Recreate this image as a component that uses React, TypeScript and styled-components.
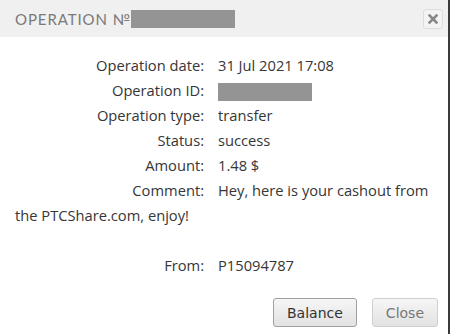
import React from 'react';
import styled, { createGlobalStyle } from 'styled-components';

interface Row {
  label: string;
  value?: string;
  redacted?: boolean;
}

const rows: Row[] = [
  { label: 'Operation date:', value: '31 Jul 2021 17:08' },
  { label: 'Operation ID:', redacted: true },
  { label: 'Operation type:', value: 'transfer' },
  { label: 'Status:', value: 'success' },
  { label: 'Amount:', value: '1.48 $' },
  { label: 'Comment:', value: 'Hey, here is your cashout from the PTCShare.com, enjoy!' },
];

const App = (): JSX.Element => {
  return (
    <>
      <GlobalStyle />
      <Dialog>
        <Header>
          <Title>
            Operation №<Redacted width={104} />
          </Title>
          <CloseIcon aria-label="close">
            <svg width="10" height="10" viewBox="0 0 10 10">
              <path d="M1.5 1.5 L8.5 8.5 M8.5 1.5 L1.5 8.5" stroke="#888" strokeWidth="2.6" strokeLinecap="square" />
            </svg>
          </CloseIcon>
        </Header>
        <Body>
          {rows.map((row, index) => (
            <Line key={index}>
              <Label>{row.label}</Label>
              {row.redacted ? <Redacted width={94} /> : row.value}
            </Line>
          ))}
          <Spacer />
          <Line>
            <Label>From:</Label>
            P15094787
          </Line>
        </Body>
        <Footer>
          <Button>Balance</Button>
          <Button muted>Close</Button>
        </Footer>
      </Dialog>
    </>
  );
};

interface RedactedProps {
  width: number;
}

interface ButtonProps {
  muted?: boolean;
}

const GlobalStyle = createGlobalStyle`
  body {
    margin: 0;
    background: #ffffff;
  }
`;

const Dialog = styled.div`
  width: 450px;
  height: 334px;
  border-right: 2px solid #3a3a3a;
  background: #fff;
  display: flex;
  flex-direction: column;
  box-sizing: border-box;
`;

const Header = styled.div`
  height: 37px;
  background: #f0f0f0;
  display: flex;
  align-items: center;
  justify-content: space-between;
  padding: 0 5px 0 15px;
  box-sizing: border-box;
`;

const Title = styled.div`
  font-family: 'Lato', sans-serif;
  font-size: 15px;
  letter-spacing: 0.9px;
  text-transform: uppercase;
  color: #7a7a7a;
  display: flex;
  align-items: center;
`;

const Redacted = styled.span<RedactedProps>`
  display: inline-block;
  width: ${(props) => props.width}px;
  height: 18px;
  background: #949494;
  vertical-align: middle;
  letter-spacing: 0;
`;

const CloseIcon = styled.button`
  width: 20px;
  height: 20px;
  padding: 0;
  border: 1px solid #dcdcdc;
  border-radius: 3px;
  background: #f3f3f3;
  display: flex;
  align-items: center;
  justify-content: center;
`;

const Body = styled.div`
  padding: 16px 16px 0 15px;
  font-family: 'Open Sans', sans-serif;
  font-size: 14.7px;
  color: #363636;
  line-height: 25px;
`;

const Line = styled.div``;

const Label = styled.span`
  display: inline-block;
  width: 189px;
  padding-right: 14px;
  text-align: right;
`;

const Spacer = styled.div`
  height: 25px;
`;

const Footer = styled.div`
  margin-top: auto;
  display: flex;
  justify-content: flex-end;
  gap: 15px;
  padding: 0 10px 7px 0;
`;

const Button = styled.button<ButtonProps>`
  height: 29px;
  padding: 0 13px;
  font-family: 'DejaVu Sans', Verdana, sans-serif;
  font-size: 14px;
  color: ${(props) => (props.muted ? '#777' : '#333')};
  border: 1px solid ${(props) => (props.muted ? '#d0d0d0' : '#a0a0a0')};
  border-radius: 3px;
  background: linear-gradient(#f6f6f6, #e2e2e2);
`;

export default App;
